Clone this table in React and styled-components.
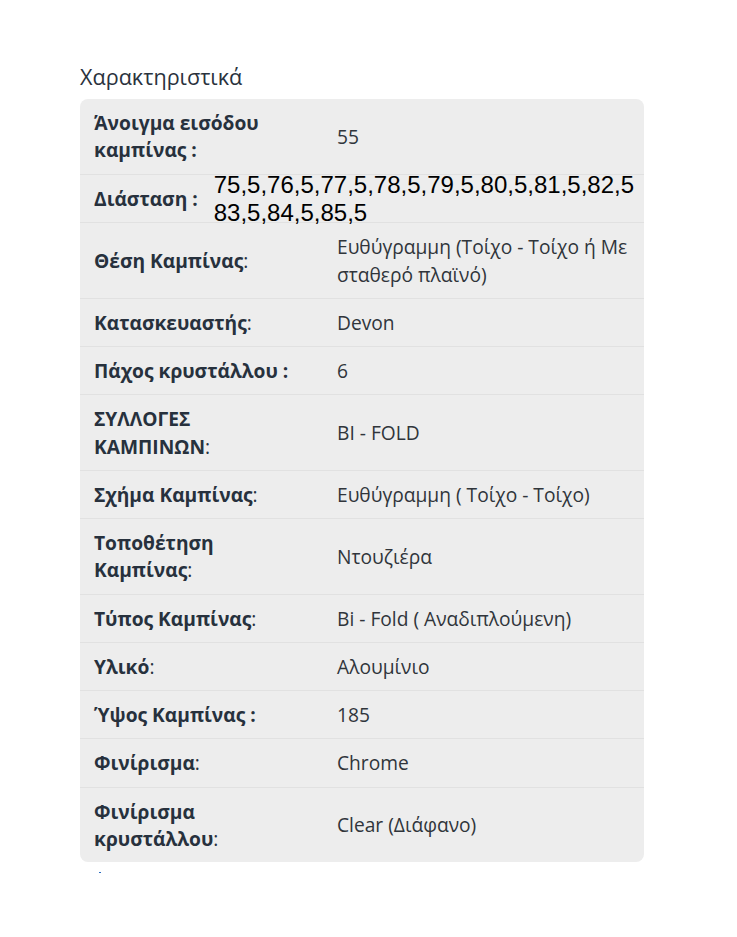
import styled, { createGlobalStyle } from "styled-components";

const GlobalStyle = createGlobalStyle`
  body {
    margin: 0;
    background: #fff;
    font-family: "Open Sans", "Noto Sans", sans-serif;
    color: #333;
  }
`;

const Page = styled.div`
  padding: 62px 93px 60px 80px;
`;

const Title = styled.h3`
  margin: 0 0 7px;
  font-size: 21.6px;
  font-weight: 400;
  line-height: 30px;
  color: #2a323d;
`;

const Table = styled.div`
  background: #ededed;
  border-radius: 8px;
  overflow: hidden;
`;

const Row = styled.div`
  display: flex;
  align-items: center;
  border-bottom: 1px solid #e1e1e1;
  &:last-child {
    border-bottom: none;
  }
`;

const Label = styled.div`
  box-sizing: border-box;
  flex: ${(p) => (p.$auto ? "0 0 auto" : "0 0 243px")};
  white-space: ${(p) => (p.$auto ? "nowrap" : "normal")};
  padding: ${(p) => (p.$auto ? "10px 2px 10px 14px" : "10px 32px 10px 14px")};
  font-size: 19.2px;
  line-height: 27.25px;
  color: #27313d;
  font-weight: 400;

  strong {
    font-weight: 700;
  }
`;

const Value = styled.div`
  flex: 1;
  min-width: 0;
  padding: 10px 14px;
  font-size: 19.2px;
  line-height: 27.25px;
  color: #30353b;
`;

const RawValue = styled.div`
  flex: 1;
  margin: -3.5px 0 -4.7px;
  padding: 0 8px 0 14px;
  font-family: "Liberation Sans", Arial, sans-serif;
  font-size: 24px;
  line-height: normal;
  color: #000;
`;

const Dot = styled.div`
  width: 2px;
  height: 1px;
  margin: 10px 0 0 19px;
  background: #2a6cc0;
`;

const rows = [
  { label: "Άνοιγμα εισόδου καμπίνας :", value: "55" },
  { label: "Θέση Καμπίνας", colon: true, value: "Ευθύγραμμη (Τοίχο - Τοίχο ή Με σταθερό πλαϊνό)" },
  { label: "Κατασκευαστής", colon: true, value: "Devon" },
  { label: "Πάχος κρυστάλλου :", value: "6" },
  { label: "ΣΥΛΛΟΓΕΣ ΚΑΜΠΙΝΩΝ", colon: true, value: "BI - FOLD" },
  { label: "Σχήμα Καμπίνας", colon: true, value: "Ευθύγραμμη ( Τοίχο - Τοίχο)" },
  { label: "Τοποθέτηση Καμπίνας", colon: true, value: "Ντουζιέρα" },
  { label: "Τύπος Καμπίνας", colon: true, value: "Bi - Fold ( Αναδιπλούμενη)" },
  { label: "Υλικό", colon: true, value: "Αλουμίνιο" },
  { label: "Ύψος Καμπίνας :", value: "185" },
  { label: "Φινίρισμα", colon: true, value: "Chrome" },
  { label: "Φινίρισμα κρυστάλλου", colon: true, value: "Clear (Διάφανο)" },
];

const SpecRow = ({ label, colon, value }) => (
  <Row>
    <Label>
      <strong>{label}</strong>
      {colon && ":"}
    </Label>
    <Value>{value}</Value>
  </Row>
);

export default function App() {
  const [first, ...rest] = rows;
  return (
    <>
      <GlobalStyle />
      <Page>
        <Title>Χαρακτηριστικά</Title>
        <Table>
          <SpecRow {...first} />
          <Row>
            <Label $auto>
              <strong>Διάσταση :</strong>
            </Label>
            <RawValue>
              75,5,76,5,77,5,78,5,79,5,80,5,81,5,82,5
              <br />
              83,5,84,5,85,5
            </RawValue>
          </Row>
          {rest.map((r) => (
            <SpecRow key={r.label} {...r} />
          ))}
        </Table>
        <Dot />
      </Page>
    </>
  );
}
